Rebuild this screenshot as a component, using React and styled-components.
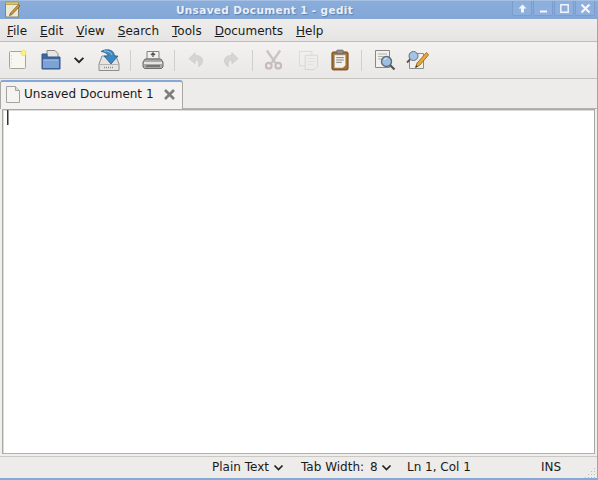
import React from 'react';
import styled, { createGlobalStyle } from 'styled-components';

const Global = createGlobalStyle`
  html, body { margin: 0; padding: 0; width: 598px; height: 480px; overflow: hidden; background: #84a8d8; }
  #root { width: 598px; height: 480px; }
`;

const Win = styled.div`
  width: 598px; height: 480px; box-sizing: border-box;
  display: flex; flex-direction: column;
  background: #edecea;
  border: solid #84a8d8; border-width: 0 1px 2px 0;
  font-family: "DejaVu Sans", sans-serif;
  color: #1a1a1a;
`;
const TitleBar = styled.div`
  height: 19px; flex: none; position: relative;
  display: flex; align-items: center; justify-content: center;
  background: linear-gradient(#8aaddb, #83a7d7);
  border-top: 1px solid #a6c0e4; box-sizing: border-box;
  margin-right: -1px; padding-right: 69px;
`;
const AppIcon = styled.svg`
  position: absolute; left: 4px; top: 0; width: 17px; height: 17px;
`;
const Title = styled.div`
  font: bold 10.5px "DejaVu Sans", sans-serif;
  letter-spacing: 0.35px; color: #e9eff8;
  text-shadow: 1px 1px 1px #5d7fae;
`;
const WinButtons = styled.div`
  position: absolute; right: 3px; top: 0; height: 15px; display: flex;
`;
const WinBtn = styled.div`
  width: 20px; height: 15px; margin-left: 1px; box-sizing: border-box;
  border: 1px solid #7a9dcd; border-top: 0; border-radius: 0 0 2px 2px;
  background: #8cafdd; display: flex; align-items: center; justify-content: center;
  svg { width: 11px; height: 11px; display: block; }
`;
const MenuBar = styled.div`
  height: 23px; flex: none; display: flex; align-items: center;
  padding: 1px 0 0 7px; gap: 13px; box-sizing: border-box;
  background: linear-gradient(#eeedeb, #e6e5e3);
  border-bottom: 1px solid #bdbcb9;
  font-size: 12px;
`;
const MenuItem = styled.span`
  u { text-underline-offset: 1px; }
`;
const ToolBar = styled.div`
  height: 37px; flex: none; display: flex; align-items: center;
  box-sizing: border-box; padding-left: 7px;
  background: linear-gradient(#f3f2f1, #e9e8e6);
  border-bottom: 1px solid #c4c3c0;
`;
const Tool = styled.div`
  width: ${p => p.$w}px; margin-left: ${p => p.$ml || 0}px; height: 26px; flex: none;
  display: flex; align-items: center; justify-content: center;
  opacity: ${p => (p.$off ? 0.32 : 1)};
  svg { display: block; }
`;
const Sep = styled.div`
  width: 1px; height: 21px; background: #d0cfcc; flex: none; margin: 0 ${p => p.$r}px 0 ${p => p.$l}px;
`;
const TabStrip = styled.div`
  height: 30px; flex: none; display: flex; align-items: flex-end;
  box-sizing: border-box; background: #edecea;
  border-bottom: 1px solid #b4b3b0; position: relative;
`;
const Tab = styled.div`
  width: 183px; height: 29px; box-sizing: border-box; margin-bottom: -1px;
  display: flex; align-items: center; position: relative;
  background: #f3f2f1;
  border: 1px solid #a9a8a5; border-top: 2px solid #84a8d8; border-bottom: 0;
  border-radius: 3px 3px 0 0;
  padding: 0 0 3px 5px; font-size: 12px;
  svg { flex: none; }
`;
const TabLabel = styled.span`
  margin-left: 4px; flex: 1; white-space: nowrap;
`;
const CloseTab = styled.svg`
  width: 13px; height: 13px; margin-right: 6px;
`;
const Body = styled.div`
  flex: 1; display: flex; padding: 0 2px; min-height: 0; background: #f0efed;
`;
const Editor = styled.div`
  flex: 1; background: #fff; position: relative;
  border: 1px solid #a8a7a4; border-bottom-color: #b0afac;
  box-shadow: inset 1px 1px 0 #dddcda;
  margin-bottom: 2px;
`;
const Caret = styled.div`
  position: absolute; left: 4px; top: 0; width: 1px; height: 15px; background: #333;
  box-shadow: 1px 0 0 #999;
`;
const StatusBar = styled.div`
  height: 22px; flex: none; display: flex; align-items: center; position: relative;
  box-sizing: border-box; font-size: 12px; background: #edecea;
  border-top: 1px solid #c9c8c5;
`;
const StatusItem = styled.span`
  position: absolute; left: ${p => p.$x}px; top: 2px; white-space: nowrap;
  display: flex; align-items: center; gap: ${p => p.$gap || 4}px; line-height: 16px;
`;
const StatusValue = styled.span`
  margin-left: 3px;
`;
const Grip = styled.svg`
  position: absolute; right: 1px; bottom: 0; width: 11px; height: 11px;
`;

const Chevron = ({ w = 11 }) => (
  <svg width={w} height={w} viewBox="0 0 11 11"><path d="M1.5 3.5 5.5 7.5 9.5 3.5" fill="none" stroke="#222" strokeWidth="1.7" /></svg>
);

const NewIcon = () => (
  <svg width="20" height="20" viewBox="0 0 20 20">
    <rect x="1.5" y="1.5" width="16" height="17" rx="1" fill="#f7f6ef" stroke="#a5a39c" />
    <path d="M3.5 5v11" stroke="#d8d7d0" strokeDasharray="1.5 2" />
    <circle cx="15.5" cy="3" r="2.6" fill="#fdf27a" stroke="#f2d83c" strokeWidth=".6" />
  </svg>
);
const OpenIcon = () => (
  <svg width="22" height="22" viewBox="0 0 22 22">
    <path d="M7 1.500h8l3 3V11H7z" fill="#e6e5e2" stroke="#8a8985" />
    <path d="M2 5h5v3h13v12H2z" fill="#3e6aa4" stroke="#31578c" />
    <path d="M2.500 10h17v9.500h-17z" fill="#7da2d4" stroke="#3c649a" />
    <path d="M3.500 11h15" stroke="#a9c4e8" />
  </svg>
);
const SaveIcon = () => (
  <svg width="24" height="24" viewBox="0 0 24 24">
    <path d="M5 8h14l3 8v6.500H2V16z" fill="#e5e4e1" stroke="#8d8c88" />
    <path d="M2.500 16.500h19" stroke="#b4b3af" />
    <path d="M7 19.500h10" stroke="#8e8d89" strokeWidth="1.500" strokeDasharray="1 1" />
    <path d="M4 3.500C9 .5 17 1 17.500 8h3.500l-7 8-7-8h4c0-2-3-4-7-4.500z" fill="#3f88bf" stroke="#22618f" strokeWidth=".8" />
    <path d="M7 3c4 0 7 1 8 4" stroke="#9cc7e6" fill="none" />
  </svg>
);
const PrintIcon = () => (
  <svg width="22" height="20" viewBox="0 0 22 20">
    <path d="M5 1.500h12V9H5z" fill="#f1f0ee" stroke="#84837f" />
    <path d="M11 3v4M9 5l2-2 2 2" fill="none" stroke="#555" strokeWidth="1.300" />
    <path d="M3 9h16l2 3v5l-1.500 1.500h-17L1 17v-5z" fill="#a9a8a5" stroke="#6e6d6a" />
    <path d="M2 12h18v2H2z" fill="#e7e6e4" />
    <path d="M4 16h14" stroke="#66655f" strokeWidth="1.500" />
  </svg>
);
const UndoIcon = ({ flip }) => (
  <svg width="18" height="20" viewBox="0 0 20 20" style={flip ? { transform: 'scaleX(-1)' } : undefined}>
    <path d="M9 2 2 8.500 9 14v-3.500c3-.5 5 1 4 7 4-3 5-6 4-8.500-1-3-4-4-8-4z" fill="#9fa3a0" stroke="#7d807e" strokeWidth=".8" />
  </svg>
);
const CutIcon = () => (
  <svg width="19" height="22" viewBox="0 0 20 22">
    <path d="M3 1 12 14M17 1 8 14" stroke="#6f6e6b" strokeWidth="2.400" fill="none" />
    <circle cx="5" cy="17" r="3" fill="none" stroke="#7a5a5a" strokeWidth="2.200" />
    <circle cx="15" cy="17" r="3" fill="none" stroke="#7a5a5a" strokeWidth="2.200" />
  </svg>
);
const CopyIcon = () => (
  <svg width="21" height="21" viewBox="0 0 22 22" style={{ opacity: 0.7 }}>
    <rect x="1.500" y="1.500" width="13" height="15" fill="#f5f5f3" stroke="#9a9996" />
    <path d="M7.500 5.500h13v12l-3 3h-10z" fill="#f0f0ee" stroke="#8b8a87" />
    <path d="M10 9h8M10 12h8M10 15h6" stroke="#b5b4b1" />
  </svg>
);
const PasteIcon = () => (
  <svg width="18" height="22" viewBox="0 0 19 23">
    <rect x="1" y="3" width="17" height="19" rx="1.500" fill="#a9702a" stroke="#6f4715" />
    <path d="M3.500 6h12v11l-3 3h-9z" fill="#f4f3ef" stroke="#8d8c88" strokeWidth=".6" />
    <path d="M5.500 9h8M5.500 11.500h8M5.500 14h6" stroke="#7d7c78" />
    <rect x="6" y="1" width="7" height="4" rx="1" fill="#8f8e8a" stroke="#5f5e5a" strokeWidth=".7" />
  </svg>
);
const FindIcon = () => (
  <svg width="22" height="22" viewBox="0 0 22 22">
    <path d="M1.500 1.500h14v17h-14z" fill="#f1f0ee" stroke="#888783" />
    <path d="M4 5h9M4 7.500h6M4 10h4" stroke="#b3b2ae" />
    <path d="M16 16l4.500 4.500" stroke="#55544f" strokeWidth="2.200" />
    <circle cx="12.500" cy="12.500" r="5" fill="#9cbfe3" stroke="#5f6b75" strokeWidth="1.400" />
    <path d="M10 11a3 3 0 0 1 3-2" stroke="#e3eef9" fill="none" />
  </svg>
);
const ReplaceIcon = () => (
  <svg width="23" height="21" viewBox="0 0 23 21">
    <path d="M3.500 3.500h14v15h-14z" fill="#f1f0ee" stroke="#8d8c88" />
    <circle cx="7.500" cy="6" r="4.500" fill="#a5c3e6" stroke="#65717c" />
    <path d="M4 9.500 1 12.500" stroke="#55544f" strokeWidth="1.800" />
    <path d="M20.500 2.500 11 13l-1.500 4.500 4-2L22.500 5z" fill="#e8a93a" stroke="#8a5d15" strokeWidth=".8" />
    <path d="M9.500 17.500l.7-2.200 1.500 1.500z" fill="#222" />
  </svg>
);
const AppGlyph = () => (
  <AppIcon viewBox="0 0 17 17">
    <rect x="1.500" y="2" width="13" height="14" fill="#ece9d8" stroke="#8a8570" />
    <rect x="1.500" y="1" width="13" height="2.500" fill="#d8c868" stroke="#9a8a40" strokeWidth=".6" />
    <path d="M14.500 3.500 6.500 12l-1 2.500 2.500-1L16 5z" fill="#cf9a3c" stroke="#6f5020" strokeWidth=".7" />
  </AppIcon>
);

const menus = [['F', 'ile'], ['E', 'dit'], ['V', 'iew'], ['S', 'earch'], ['T', 'ools'], ['D', 'ocuments'], ['H', 'elp']];

export default function App() {
  return (
    <>
      <Global />
      <Win>
        <TitleBar>
          <AppGlyph />
          <Title>Unsaved Document 1 - gedit</Title>
          <WinButtons>
            <WinBtn><svg viewBox="0 0 11 11"><path d="M5.500 1.500 9.500 5.500H7v4H4v-4H1.500z" fill="#f3f6fb" /></svg></WinBtn>
            <WinBtn><svg viewBox="0 0 11 11"><path d="M2 7.500h7v2H2z" fill="#f3f6fb" /></svg></WinBtn>
            <WinBtn><svg viewBox="0 0 11 11"><path d="M1.800 1.800h7.400v7.400H1.800z" fill="none" stroke="#f3f6fb" strokeWidth="1.400" /></svg></WinBtn>
            <WinBtn><svg viewBox="0 0 11 11"><path d="M1.500 1.500 9.500 9.500M9.500 1.500 1.500 9.500" stroke="#f3f6fb" strokeWidth="2.200" /></svg></WinBtn>
          </WinButtons>
        </TitleBar>
        <MenuBar>
          {menus.map(([a, b]) => <MenuItem key={a}><u>{a}</u>{b}</MenuItem>)}
        </MenuBar>
        <ToolBar>
          <Tool $w={22}><NewIcon /></Tool>
          <Tool $w={36} $ml={4}><OpenIcon /></Tool>
          <Tool $w={20}><Chevron w={12} /></Tool>
          <Tool $w={40}><SaveIcon /></Tool>
          <Sep $l={1} $r={4} />
          <Tool $w={36}><PrintIcon /></Tool>
          <Sep $l={3} $r={4} />
          <Tool $off $w={34}><UndoIcon /></Tool>
          <Tool $off $w={36}><UndoIcon flip /></Tool>
          <Sep $l={3} $r={3} />
          <Tool $off $w={34}><CutIcon /></Tool>
          <Tool $off $w={36}><CopyIcon /></Tool>
          <Tool $w={28}><PasteIcon /></Tool>
          <Sep $l={7} $r={6} />
          <Tool $w={34}><FindIcon /></Tool>
          <Tool $w={30}><ReplaceIcon /></Tool>
        </ToolBar>
        <TabStrip>
          <Tab>
            <svg width="14" height="17" viewBox="0 0 14 17">
              <path d="M.5.500h9l4 4v12H.500z" fill="#f5f4f0" stroke="#a3a29e" />
              <path d="M9.500.500v4h4" fill="#dddcd8" stroke="#a3a29e" />
            </svg>
            <TabLabel>Unsaved Document 1</TabLabel>
            <CloseTab viewBox="0 0 13 13"><path d="M2 2 11 11M11 2 2 11" stroke="#7d7d7a" strokeWidth="2.600" /></CloseTab>
          </Tab>
        </TabStrip>
        <Body>
          <Editor><Caret /></Editor>
        </Body>
        <StatusBar>
          <StatusItem $x={212}>Plain Text <Chevron /></StatusItem>
          <StatusItem $x={301} $gap={3}>Tab Width:<StatusValue>8</StatusValue><Chevron /></StatusItem>
          <StatusItem $x={407}>Ln 1, Col 1</StatusItem>
          <StatusItem $x={541}>INS</StatusItem>
          <Grip viewBox="0 0 11 11"><path d="M9 1h1v1H9zM6 4h1v1H6zM9 4h1v1H9zM3 7h1v1H3zM6 7h1v1H6zM9 7h1v1H9zM0 10h1v1H0zM3 10h1v1H3zM6 10h1v1H6zM9 10h1v1H9z" fill="#bdbcb9" /></Grip>
        </StatusBar>
      </Win>
    </>
  );
}
